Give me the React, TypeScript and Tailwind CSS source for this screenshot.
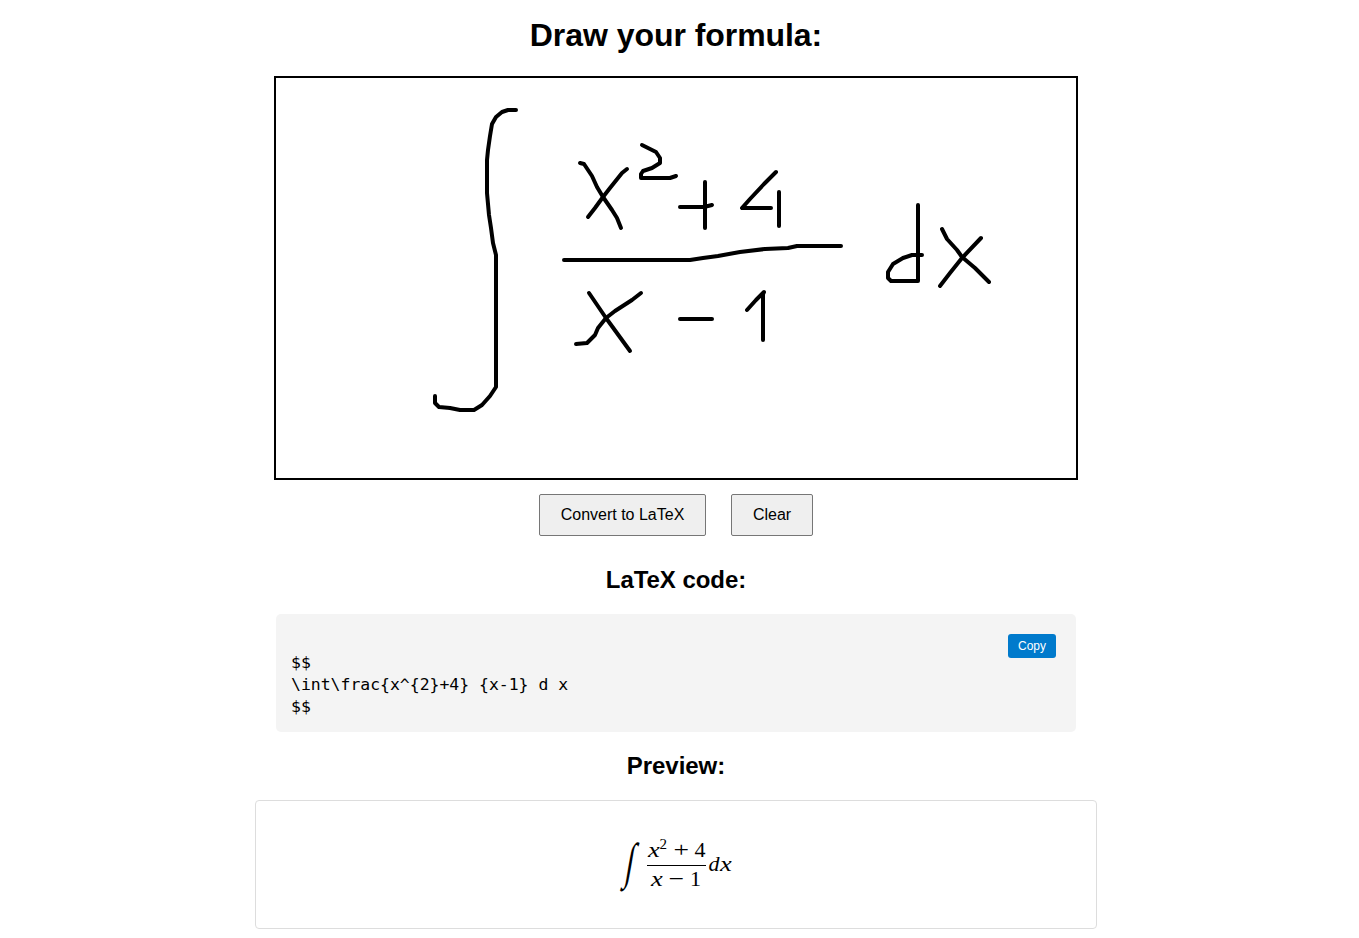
const strokes = [
  '516,110 508,110 502,112 496,117 492,124 490,136 488,150 487,160 487,193 489,215 491,228 493,243 496,255 496,387 490,396 482,405 474,410 460,410 450,408 439,407 435,403 435,396',
  '580,163 584,164 592,176 597,187 603,197 612,210 617,218 621,228',
  '627,169 622,173 610,188 603,197 595,208 588,217',
  '642,145 650,149 656,152 660,158 660,163 652,168 643,171 641,174 641,178 655,178 670,178 676,176',
  '680,207 704,207 712,205',
  '705,182 705,228',
  '776,172 764,184 750,199 742,208 771,208',
  '779,192 779,226',
  '564,260 690,260 703,258 718,256 740,252 765,249 788,248 797,246 841,246',
  '589,293 606,318 630,351',
  '641,293 632,300 615,311 606,318 598,328 595,335 587,343 576,344',
  '680,319 712,319',
  '747,310 756,300 764,292 763,294 763,340',
  '918,205 918,281 891,281 888,278 888,272 893,264 903,258 912,255 922,255',
  '942,229 947,239 957,250 962,257 975,268 984,277 989,282',
  '981,238 962,258 950,273 940,286',
];

const latex = '\n$$\n\\int\\frac{x^{2}+4} {x-1} d x\n$$';

function DrawingCanvas() {
  return (
    <svg viewBox="276 78 800 400" className="mt-5 h-[404px] w-[804px] border-2 border-black">
      {strokes.map((points) => (
        <polyline
          key={points}
          points={points}
          fill="none"
          stroke="black"
          strokeWidth="4"
          strokeLinecap="round"
          strokeLinejoin="round"
        />
      ))}
    </svg>
  );
}

function VariableX() {
  return <i className="inline-block w-[12px] origin-left scale-x-[1.2]">x</i>;
}

function Formula() {
  return (
    <div className="flex items-center pt-0.5 font-['Liberation_Serif',serif] text-[22px] leading-none">
      <span className="mr-1.5 flex h-[50px] w-[20px] items-center justify-center pb-[9px] text-[50px]">
        <span className="inline-block scale-x-[0.6] -skew-x-[16deg]">∫</span>
      </span>
      <span className="flex w-[59px] flex-col items-center">
        <span className="flex h-[27px] w-full items-end justify-between border-b border-black pb-[4px]">
          <span className="flex items-start pl-px">
            <VariableX />
            <span className="-mt-0.5 text-[15px] leading-none">2</span>
          </span>
          <span className="origin-center scale-x-[1.25]">+</span>
          <span>4</span>
        </span>
        <span className="flex h-[26px] w-[50px] items-start justify-between pt-[2px]">
          <VariableX />
          <span className="origin-center scale-x-[1.25]">−</span>
          <span>1</span>
        </span>
      </span>
      <span className="ml-[3px] flex pb-[3px]">
        <i>d</i>
        <VariableX />
      </span>
    </div>
  );
}

export default function App() {
  return (
    <main className="flex w-[1352px] flex-col items-center pt-4 font-['Liberation_Sans',Arial,sans-serif] text-black">
      <h1 className="h-10 text-[32px] font-bold leading-[38px] tracking-[-0.05px]">Draw your formula:</h1>
      <DrawingCanvas />
      <div className="mt-3.5 flex gap-[25px]">
        <button className="h-[42px] w-[167px] rounded-[2px] border border-[#767676] bg-[#efefef] pb-px text-base">
          Convert to LaTeX
        </button>
        <button className="h-[42px] w-[82px] rounded-[2px] border border-[#767676] bg-[#efefef] pb-px text-base">
          Clear
        </button>
      </div>
      <h2 className="mt-[30px] text-2xl font-bold leading-7 tracking-[-0.05px]">LaTeX code:</h2>
      <div className="mt-5 flex h-[118px] w-[800px] items-start justify-between rounded-[5px] bg-[#f4f4f4] pl-[15px] pr-5">
        <pre className="pt-4 font-['DejaVu_Sans_Mono',monospace] text-[16.45px] leading-[22px]">{latex}</pre>
        <button className="mt-5 h-6 w-12 rounded-[3px] bg-[#007acc] text-xs text-white">Copy</button>
      </div>
      <h2 className="mt-5 text-2xl font-bold leading-7 tracking-[-0.05px]">Preview:</h2>
      <section className="mt-5 flex h-[129px] w-[842px] items-center justify-center rounded-[4px] border border-[#dddddd]">
        <Formula />
      </section>
    </main>
  );
}
